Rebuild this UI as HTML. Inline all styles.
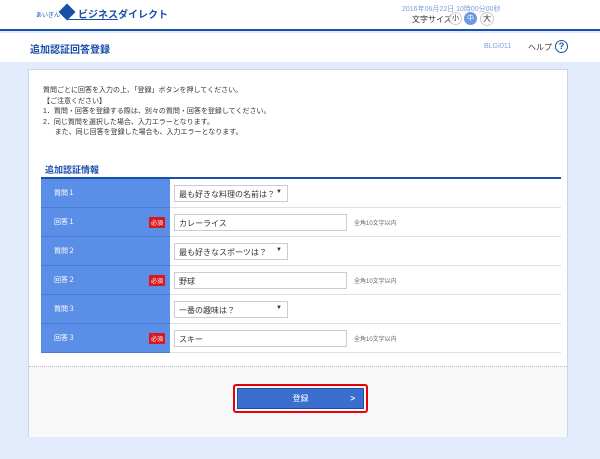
<!DOCTYPE html>
<html><head><meta charset="utf-8"><style>
*{margin:0;padding:0;box-sizing:border-box}
body{width:600px;height:459px;background:#e1ebfb;font-family:"Liberation Sans","Noto Sans CJK JP",sans-serif;position:relative;overflow:hidden;color:#333}
.hdr{position:absolute;left:0;top:0;width:600px;height:31px;background:#fff;border-bottom:2px solid #1a4fa8}
.tbar{position:absolute;left:0;top:33px;width:600px;height:29px;background:#fff}
.abs{position:absolute;white-space:nowrap}
.card{position:absolute;left:28px;top:69px;width:540px;height:368px;background:#fff;border:1px solid #cdd6e3}
.foot{position:absolute;left:0;top:296px;width:538px;height:71px;background:#f8f8f8;border-top:1px dotted #bbb}
.row{position:absolute;left:12px;width:520px;height:29px;border-bottom:1px solid #e0e0e0}
.lab{position:absolute;left:0;top:0;width:129px;height:29px;background:#5b8ee6;color:#fff;font-size:7px;padding:9px 0 0 13px;border-bottom:1px solid #4a7cd5}
.req{position:absolute;left:108px;top:9px;background:#d9181d;color:#fff;font-size:6px;padding:1px 2px}
.sel{position:absolute;left:133px;top:6px;width:114px;height:17px;border:1px solid #ccc;font-size:8px;padding:3px 4px;background:#fff}
.sel:after{content:"▼";position:absolute;right:5px;top:3px;font-size:6px}
.inp{position:absolute;left:133px;top:6px;width:173px;height:17px;border:1px solid #ccc;font-size:8px;padding:3px 4px}
.note{position:absolute;left:313px;top:10px;font-size:6px;color:#666}
</style></head><body>
<div class="hdr">
 <div class="abs" style="left:36px;top:10px;font-size:6px;color:#1a4fa8">あいぎん</div>
 <div class="abs" style="left:61px;top:6px;width:12px;height:12px;background:#1a4fa8;transform:rotate(45deg)"></div>
 <div class="abs" style="left:78px;top:6px;font-size:10px;color:#1a4fa8;font-weight:bold">ビジネスダイレクト</div>
 <div class="abs" style="left:68px;top:19px;width:50px;height:1px;background:#1a4fa8"></div>
 <div class="abs" style="left:402px;top:4px;font-size:7px;color:#7aa0dc">2016年06月22日 10時00分00秒</div>
 <div class="abs" style="left:412px;top:14px;font-size:8px">文字サイズ</div>
 <div class="abs" style="left:449px;top:12px;width:13px;height:13px;border-radius:50%;border:1px solid #ccc;font-size:7px;text-align:center;line-height:11px">小</div>
 <div class="abs" style="left:464px;top:12px;width:13px;height:13px;border-radius:50%;background:#6a98e0;color:#fff;font-size:7px;text-align:center;line-height:13px">中</div>
 <div class="abs" style="left:480px;top:12px;width:14px;height:14px;border-radius:50%;border:1px solid #ccc;font-size:8px;text-align:center;line-height:12px">大</div>
</div>
<div class="tbar">
 <div class="abs" style="left:30px;top:8px;font-size:10px;color:#1a4fa8;font-weight:bold">追加認証回答登録</div>
 <div class="abs" style="left:484px;top:10px;font-size:7px;color:#7aa0dc">BLGI011</div>
 <div class="abs" style="left:528px;top:9px;font-size:8px">ヘルプ</div>
 <div class="abs" style="left:555px;top:7px;width:13px;height:13px;border-radius:50%;border:1.5px solid #1a4fa8;color:#1a4fa8;font-size:9px;text-align:center;line-height:10px;font-weight:bold">?</div>
</div>
<div class="card">
 <div class="abs" style="left:14px;top:16px;font-size:7px;line-height:10.5px">質問ごとに回答を入力の上、「登録」ボタンを押してください。<br>【ご注意ください】<br>1．質問・回答を登録する際は、別々の質問・回答を登録してください。<br>2．同じ質問を選択した場合、入力エラーとなります。<br>&nbsp;&nbsp;&nbsp;&nbsp;&nbsp;&nbsp;また、同じ回答を登録した場合も、入力エラーとなります。</div>
 <div class="abs" style="left:16px;top:93px;font-size:9px;color:#1a4fa8;font-weight:bold">追加認証情報</div>
 <div class="abs" style="left:12px;top:107px;width:520px;height:2px;background:#1a4fa8"></div>
 <div class="row" style="top:109px"><div class="lab">質問１</div><div class="sel">最も好きな料理の名前は？</div></div>
 <div class="row" style="top:138px"><div class="lab">回答１<span class="req">必須</span></div><div class="inp">カレーライス</div><div class="note">全角10文字以内</div></div>
 <div class="row" style="top:167px"><div class="lab">質問２</div><div class="sel">最も好きなスポーツは？</div></div>
 <div class="row" style="top:196px"><div class="lab">回答２<span class="req">必須</span></div><div class="inp">野球</div><div class="note">全角10文字以内</div></div>
 <div class="row" style="top:225px"><div class="lab">質問３</div><div class="sel">一番の趣味は？</div></div>
 <div class="row" style="top:254px"><div class="lab">回答３<span class="req">必須</span></div><div class="inp">スキー</div><div class="note">全角10文字以内</div></div>
 <div class="foot">
  <div class="abs" style="left:204px;top:17px;width:135px;height:29px;border:2px solid #e8000b;border-radius:3px;padding:2px">
   <div style="width:100%;height:100%;background:#3a6fcf;border:1px solid #1a4fa8;color:#fff;font-size:8px;text-align:center;line-height:19px;position:relative">登録<span style="position:absolute;right:8px;top:0;font-weight:bold">&gt;</span></div>
  </div>
 </div>
</div>
</body></html>
